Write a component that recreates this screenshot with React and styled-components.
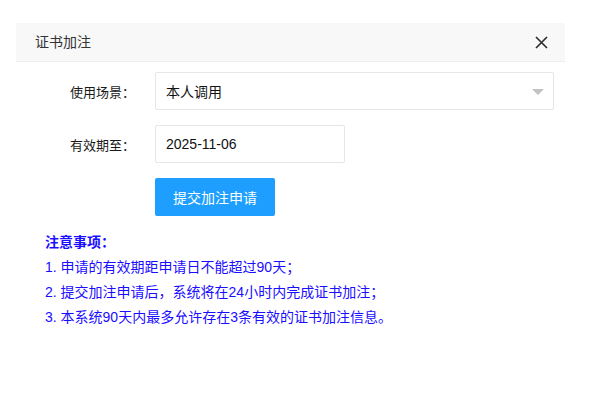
import React from "react";
import styled, { createGlobalStyle } from "styled-components";

const Global = createGlobalStyle`
  html, body { margin: 0; padding: 0; background: #fff; }
  body { font-family: "Liberation Sans", "Noto Sans CJK SC", sans-serif; color: #333; }
  * { box-sizing: border-box; }
`;

const Page = styled.div`
  padding: 23px 34px 0 16px;
`;

const Dialog = styled.div`
  width: 549px;
  background: #fff;
`;

const Header = styled.div`
  height: 39px;
  background: #f8f8f8;
  border-bottom: 1px solid #eee;
  display: flex;
  align-items: center;
  justify-content: space-between;
  padding: 0 17px 0 19px;
  font-size: 14px;
  line-height: 38px;
  color: #333;
`;

const Close = styled.button`
  border: 0;
  background: transparent;
  padding: 0;
  width: 14px;
  height: 14px;
  display: flex;
  align-items: center;
  justify-content: center;
  cursor: pointer;
`;

const Body = styled.div`
  padding: 10px 11px 0 0;
  display: flex;
  flex-direction: column;
  gap: 15px;
`;

const Row = styled.div`
  display: flex;
  align-items: center;
`;

const Label = styled.label`
  width: 139px;
  padding-right: 20px;
  text-align: right;
  font-size: 13px;
  color: #1a1a1a;
  flex: none;
`;

const Field = styled.div`
  position: relative;
  height: 38px;
  width: ${(p) => (p.$full ? "auto" : "190px")};
  flex: ${(p) => (p.$full ? "1" : "none")};
  border: 1px solid #e6e6e6;
  border-radius: 2px;
  background: #fff;
  display: flex;
  align-items: center;
  padding-left: 10px;
  font-size: 14px;
  color: #111;
`;

const Caret = styled.span`
  position: absolute;
  right: 9px;
  top: 16px;
  width: 0;
  height: 0;
  border-left: 6px solid transparent;
  border-right: 6px solid transparent;
  border-top: 6px solid #c2c2c2;
`;

const Button = styled.button`
  margin-left: 139px;
  width: 120px;
  height: 38px;
  border: 0;
  border-radius: 2px;
  background: #1e9fff;
  color: #fff;
  font-family: inherit;
  font-size: 14px;
  cursor: pointer;
`;

const Notes = styled.div`
  padding: 14px 0 0 29px;
  color: #1a0dff;
  font-size: 14px;
  line-height: 25px;
`;

const NotesTitle = styled.div`
  font-weight: bold;
`;

export default function App() {
  return (
    <>
      <Global />
      <Page>
        <Dialog>
          <Header>
            <span>证书加注</span>
            <Close aria-label="关闭">
              <svg width="13" height="13" viewBox="0 0 13 13">
                <path d="M1 1 L12 12 M12 1 L1 12" stroke="#2b2b2b" strokeWidth="1.6" />
              </svg>
            </Close>
          </Header>
          <Body>
            <Row>
              <Label>使用场景：</Label>
              <Field $full>
                本人调用
                <Caret />
              </Field>
            </Row>
            <Row>
              <Label>有效期至：</Label>
              <Field>2025-11-06</Field>
            </Row>
            <Row>
              <Button>提交加注申请</Button>
            </Row>
          </Body>
          <Notes>
            <NotesTitle>注意事项：</NotesTitle>
            <div>1. 申请的有效期距申请日不能超过90天；</div>
            <div>2. 提交加注申请后，系统将在24小时内完成证书加注；</div>
            <div>3. 本系统90天内最多允许存在3条有效的证书加注信息。</div>
          </Notes>
        </Dialog>
      </Page>
    </>
  );
}
